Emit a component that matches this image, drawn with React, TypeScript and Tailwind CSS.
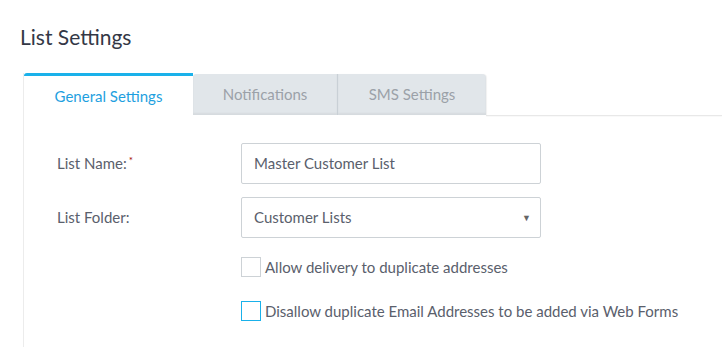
import React from "react";

export default function App() {
  return (
    <div className="w-[722px] h-[347px] bg-white overflow-hidden" style={{ fontFamily: "Lato, 'Noto Sans', sans-serif" }}>
      <div className="pl-5 pt-[23px] h-[73px]">
        <h1 className="text-[21px] leading-[28px] text-[#333846]">List Settings</h1>
      </div>
      <div className="ml-[23px] border-l border-[#ececec] h-[274px]">
        <div className="flex h-[43px]">
          <div className="w-[169px] h-[43px] border-t-[3px] border-[#1ab1ea] rounded-tl-[3px] bg-white flex items-center justify-center text-[15px] text-[#1e9fe0]">
            General Settings
          </div>
          <div className="mt-[1px] w-[145px] h-[41px] bg-[#e1e6ea] rounded-tl-[3px] border-r border-[#c9d0d6] shadow-[inset_0_-2px_2px_rgba(0,0,0,0.05)] flex items-center justify-center text-[15px] text-[#9ba1a8]">
            Notifications
          </div>
          <div className="mt-[1px] w-[148px] h-[41px] bg-[#e1e6ea] rounded-tr-[4px] shadow-[inset_0_-2px_2px_rgba(0,0,0,0.05),1px_0_1px_rgba(0,0,0,0.06)] flex items-center justify-center text-[15px] text-[#9ba1a8]">
            SMS Settings
          </div>
          <div className="flex-1 self-end border-b border-[#e8e8e8] shadow-[0_1px_1px_rgba(0,0,0,0.03)]" />
        </div>
        <div className="pt-[27px] pl-[33px]">
          <div className="flex items-center h-[41px]">
            <div className="w-[184px] text-[15px] text-[#5a606c]">
              List Name:<sup className="text-[#a00000] text-[10px] relative -top-[5px] ml-[2px]">*</sup>
            </div>
            <div className="w-[300px] h-[41px] border border-[#cdd2d6] rounded-[2px] flex items-center px-[12px] text-[15px] text-[#5a606c]">
              Master Customer List
            </div>
          </div>
          <div className="flex items-center h-[41px] mt-[13px]">
            <div className="w-[184px] text-[15px] text-[#5a606c]">List Folder:</div>
            <div className="w-[300px] h-[41px] border border-[#cdd2d6] rounded-[2px] flex items-center justify-between pl-[12px] pr-[9px] text-[15px] text-[#5a606c]">
              <span>Customer Lists</span>
              <span className="text-[9px] text-[#666]">▼</span>
            </div>
          </div>
          <div className="ml-[184px] mt-[19px] flex items-center h-[20px]">
            <div className="w-[20px] h-[20px] border border-[#cdd2d6] bg-white" />
            <span className="ml-[4px] text-[15px] text-[#5a606c]">Allow delivery to duplicate addresses</span>
          </div>
          <div className="ml-[184px] mt-[24px] flex items-center h-[20px]">
            <div className="w-[20px] h-[20px] border border-[#1ab1ea] bg-white" />
            <span className="ml-[4px] text-[15px] text-[#5a606c]">Disallow duplicate Email Addresses to be added via Web Forms</span>
          </div>
        </div>
      </div>
    </div>
  );
}
